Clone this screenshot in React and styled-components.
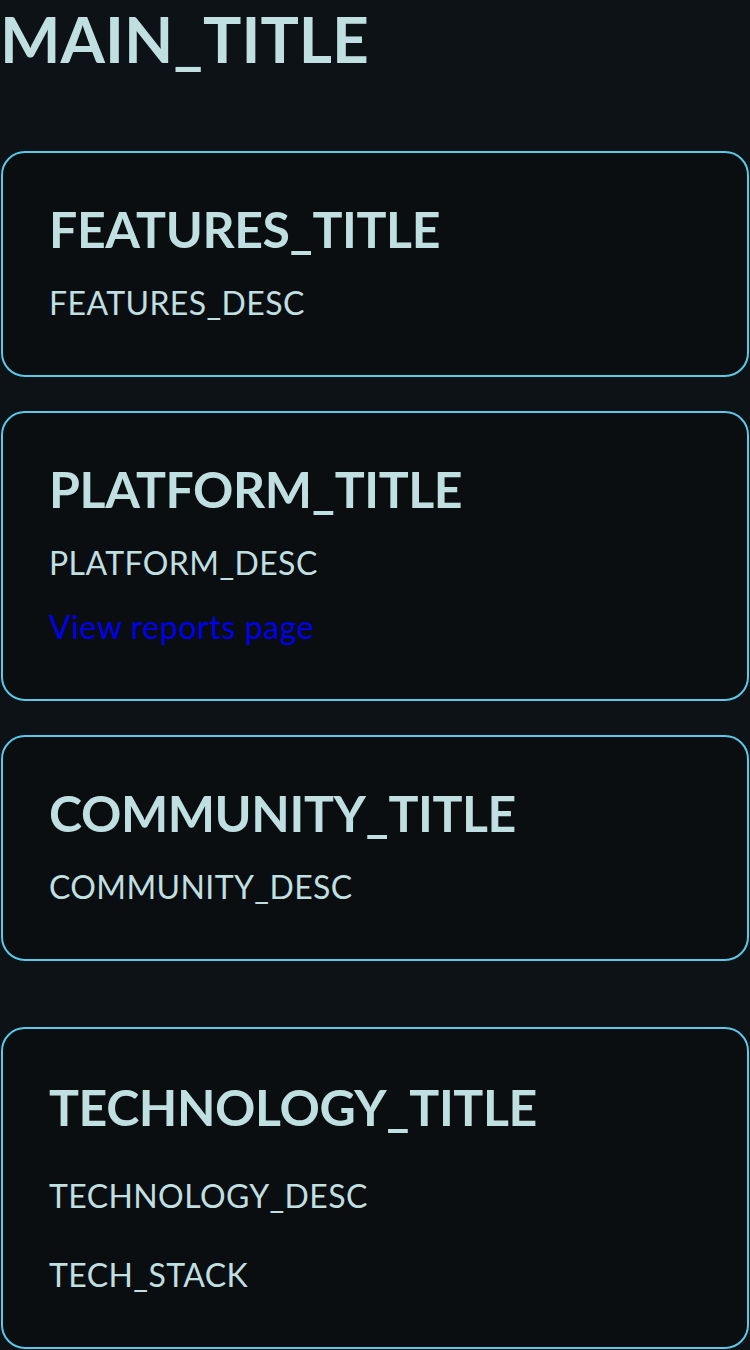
import styled, { createGlobalStyle } from "styled-components";

const Global = createGlobalStyle`
  html, body {
    margin: 0;
    padding: 0;
    background: #0d1216;
  }
  body {
    font-family: "Lato", "Noto Sans", sans-serif;
    color: #c0dfe0;
  }
`;

const Page = styled.div`
  display: flex;
  flex-direction: column;
  min-height: 1350px;
`;

const MainTitle = styled.h1`
  margin: 0;
  font-size: 64px;
  line-height: 78px;
  font-weight: 700;
  color: #c0dfe0;
`;

const Stack = styled.div`
  display: flex;
  flex-direction: column;
  gap: 34px;
  padding: 0 1px;
  margin-top: 73px;
`;

const Card = styled.section`
  background: #0a0e11;
  border: 2px solid #5cc8e8;
  border-radius: 24px;
  padding: ${({ $top }) => $top || 46}px 46px 52px;
  display: flex;
  flex-direction: column;
  gap: ${({ $gap }) => $gap || 24}px;
  margin-top: ${({ $extra }) => $extra || 0}px;
`;

const Title = styled.h2`
  margin: 0;
  font-size: 50px;
  line-height: 60px;
  font-weight: 700;
  letter-spacing: -0.4px;
  color: #c0dfe0;
`;

const Desc = styled.p`
  margin: 0;
  font-size: 32px;
  line-height: 40px;
  letter-spacing: 0.4px;
  color: #c0dfe0;
`;

const Link = styled.a`
  font-size: 32px;
  line-height: 40px;
  letter-spacing: 0.6px;
  color: #0000ee;
  text-decoration: none;
`;

export default function App() {
  return (
    <>
      <Global />
      <Page>
        <MainTitle>MAIN_TITLE</MainTitle>
        <Stack>
          <Card>
            <Title>FEATURES_TITLE</Title>
            <Desc>FEATURES_DESC</Desc>
          </Card>
          <Card>
            <Title>PLATFORM_TITLE</Title>
            <Desc>PLATFORM_DESC</Desc>
            <Link href="#reports">View reports page</Link>
          </Card>
          <Card>
            <Title>COMMUNITY_TITLE</Title>
            <Desc>COMMUNITY_DESC</Desc>
          </Card>
          <Card $extra={32} $top={48} $gap={39}>
            <Title>TECHNOLOGY_TITLE</Title>
            <Desc>TECHNOLOGY_DESC</Desc>
            <Desc>TECH_STACK</Desc>
          </Card>
        </Stack>
      </Page>
    </>
  );
}
